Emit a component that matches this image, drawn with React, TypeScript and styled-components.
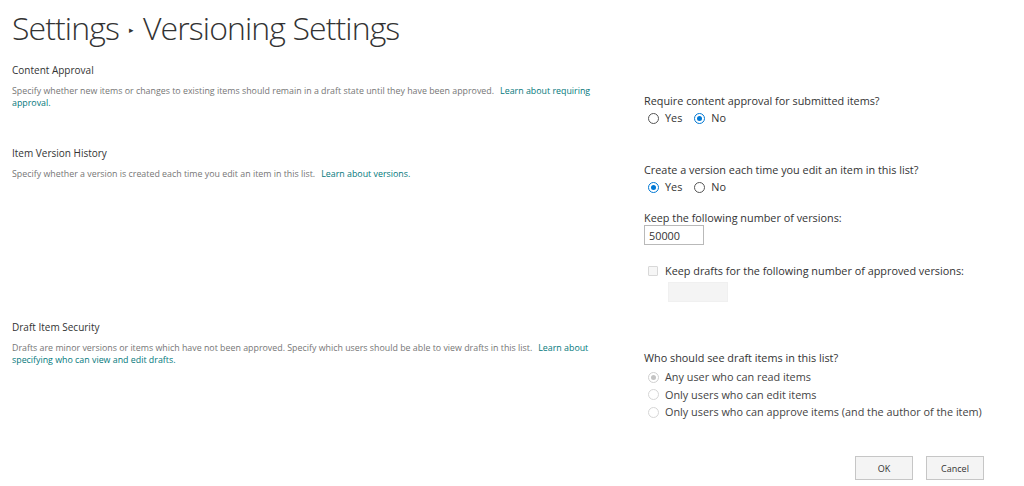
import React from 'react';
import styled, { createGlobalStyle, css } from 'styled-components';

const GlobalStyle = createGlobalStyle`
  html, body {
    margin: 0;
    padding: 0;
    background: #ffffff;
  }
  body {
    font-family: "Open Sans", "Noto Sans", sans-serif;
    color: #333333;
  }
`;

const Page = styled.div`
  width: 1024px;
  height: 486px;
  overflow: hidden;
  padding: 0 12px;
  box-sizing: border-box;
`;

const Title = styled.h1`
  margin: 0;
  height: 63px;
  padding-bottom: 8px;
  box-sizing: border-box;
  font-size: 32px;
  font-weight: 300;
  color: #333333;
  display: flex;
  align-items: center;
  gap: 10px;
  letter-spacing: -0.9px;
`;

const Crumb = styled.span`
  font-size: 9px;
  color: #333;
  margin-top: 4px;
`;

const Section = styled.div<{ $height: number }>`
  display: grid;
  grid-template-columns: 632px 1fr;
  height: ${({ $height }) => $height}px;
`;

const Info = styled.div`
  max-width: 600px;
`;

const SectionTitle = styled.h3`
  margin: 0 0 8px 0;
  font-size: 10px;
  font-weight: 400;
  color: #333333;
  line-height: 14px;
`;

const Description = styled.p`
  margin: 0;
  font-size: 8.85px;
  line-height: 12px;
  color: #767676;
`;

const Link = styled.a`
  color: #03787c;
  text-decoration: none;
  margin-left: 6px;
`;

const Controls = styled.div<{ $top: number }>`
  padding-top: ${({ $top }) => $top}px;
  display: flex;
  flex-direction: column;
`;

const Question = styled.div`
  font-size: 10.85px;
  line-height: 14px;
  color: #333333;
`;

const RadioRow = styled.div<{ $stack?: boolean }>`
  display: flex;
  flex-direction: ${({ $stack }) => ($stack ? 'column' : 'row')};
  gap: ${({ $stack }) => ($stack ? '3.5px' : '12px')};
  padding-left: 4px;
  margin-top: ${({ $stack }) => ($stack ? '5px' : '3px')};
`;

const Option = styled.label<{ $disabled?: boolean }>`
  display: flex;
  align-items: center;
  gap: 6px;
  font-size: 10.85px;
  line-height: 14px;
  color: ${({ $disabled }) => ($disabled ? '#444' : '#333')};
`;

const Radio = styled.span<{ $checked?: boolean; $disabled?: boolean }>`
  width: 11px;
  height: 11px;
  border-radius: 50%;
  box-sizing: border-box;
  border: 1px solid ${({ $disabled }) => ($disabled ? '#d6d6d6' : '#555')};
  background: #fff;
  position: relative;
  flex: none;
  ${({ $checked, $disabled }) =>
    $checked &&
    css`
      border-color: ${$disabled ? '#d0d0d0' : '#0078d4'};
      &::after {
        content: '';
        position: absolute;
        inset: 2px;
        border-radius: 50%;
        background: ${$disabled ? '#c4c4c4' : '#0078d4'};
      }
    `}
`;

const FieldLabel = styled.div`
  font-size: 10.85px;
  line-height: 14px;
  color: #333;
  margin-top: 17px;
`;

const NumberInput = styled.input<{ $disabled?: boolean }>`
  width: 60px;
  height: 20px;
  box-sizing: border-box;
  margin: 0;
  padding: 0 4px;
  font-family: inherit;
  font-size: 10.85px;
  color: #333;
  border: 1px solid ${({ $disabled }) => ($disabled ? '#f0f0f0' : '#b9b9b9')};
  background: ${({ $disabled }) => ($disabled ? '#f4f4f4' : '#fff')};
  outline: none;
`;

const CheckRow = styled.label`
  display: flex;
  align-items: center;
  gap: 7px;
  margin-top: 19px;
  padding-left: 4px;
  font-size: 10.85px;
  line-height: 14px;
  color: #333;
`;

const CheckBox = styled.span`
  width: 10px;
  height: 10px;
  box-sizing: border-box;
  border: 1px solid #d8d8d8;
  background: #f6f6f6;
  border-radius: 1px;
`;

const Indented = styled.div`
  padding-left: 24px;
  margin-top: 1px;
`;

const Buttons = styled.div`
  display: flex;
  justify-content: flex-end;
  gap: 13px;
  padding-right: 28px;
  margin-top: 6px;
`;

const Button = styled.button`
  width: 58px;
  height: 24px;
  font-family: inherit;
  font-size: 9px;
  color: #333;
  background: #f4f4f4;
  border: 1px solid #c6c6c6;
  padding: 0;
`;

export default function App() {
  return (
    <Page>
      <GlobalStyle />
      <Title>
        Settings
        <Crumb>▸</Crumb>
        Versioning Settings
      </Title>

      <Section $height={83}>
        <Info>
          <SectionTitle>Content Approval</SectionTitle>
          <Description>
            Specify whether new items or changes to existing items should remain in a draft state
            until they have been approved.
            <Link href="#">Learn about requiring approval.</Link>
          </Description>
        </Info>
        <Controls $top={31}>
          <Question>Require content approval for submitted items?</Question>
          <RadioRow>
            <Option>
              <Radio />
              Yes
            </Option>
            <Option>
              <Radio $checked />
              No
            </Option>
          </RadioRow>
        </Controls>
      </Section>

      <Section $height={174}>
        <Info>
          <SectionTitle>Item Version History</SectionTitle>
          <Description>
            Specify whether a version is created each time you edit an item in this list.
            <Link href="#">Learn about versions.</Link>
          </Description>
        </Info>
        <Controls $top={17}>
          <Question>Create a version each time you edit an item in this list?</Question>
          <RadioRow>
            <Option>
              <Radio $checked />
              Yes
            </Option>
            <Option>
              <Radio />
              No
            </Option>
          </RadioRow>
          <FieldLabel>Keep the following number of versions:</FieldLabel>
          <NumberInput defaultValue="50000" />
          <CheckRow>
            <CheckBox />
            Keep drafts for the following number of approved versions:
          </CheckRow>
          <Indented>
            <NumberInput $disabled disabled />
          </Indented>
        </Controls>
      </Section>

      <Section $height={130}>
        <Info>
          <SectionTitle>Draft Item Security</SectionTitle>
          <Description>
            Drafts are minor versions or items which have not been approved. Specify which users
            should be able to view drafts in this list.
            <Link href="#">Learn about specifying who can view and edit drafts.</Link>
          </Description>
        </Info>
        <Controls $top={31}>
          <Question>Who should see draft items in this list?</Question>
          <RadioRow $stack>
            <Option $disabled>
              <Radio $checked $disabled />
              Any user who can read items
            </Option>
            <Option $disabled>
              <Radio $disabled />
              Only users who can edit items
            </Option>
            <Option $disabled>
              <Radio $disabled />
              Only users who can approve items (and the author of the item)
            </Option>
          </RadioRow>
        </Controls>
      </Section>

      <Buttons>
        <Button>OK</Button>
        <Button>Cancel</Button>
      </Buttons>
    </Page>
  );
}
